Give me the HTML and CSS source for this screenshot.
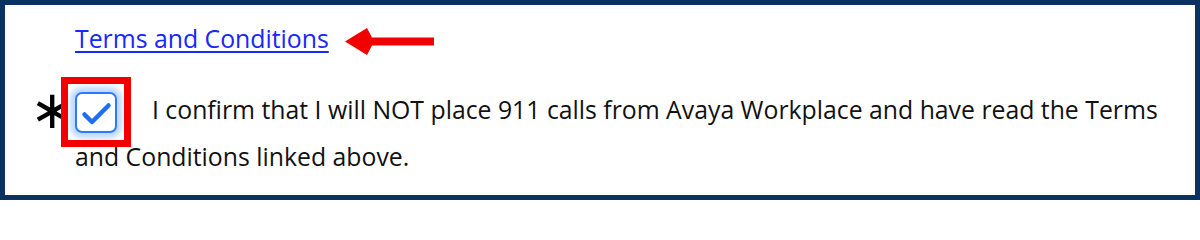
FILE: index.html
```html
<!DOCTYPE html>
<html lang="en">
<head>
<meta charset="utf-8">
<title>Terms and Conditions</title>
<link rel="stylesheet" href="styles.css">
</head>
<body>
<div class="frame">
  <div class="terms-row">
    <a class="terms-link" href="#">Terms and Conditions</a>
    <svg class="arrow" width="90" height="28" viewBox="0 0 90 28" aria-hidden="true">
      <polygon points="0,13.5 22,0 27,9.5 89,9.5 89,17.5 27,17.5 22,27" fill="#f20000"/>
    </svg>
  </div>
  <p class="consent"><span class="req">∗</span><span class="cb-wrap"><span class="cb"><svg width="42" height="41" viewBox="0 0 42 41"><polyline points="9.5,22.5 17,30 33.5,13.5" fill="none" stroke="#1d6ff2" stroke-width="4.5" stroke-linecap="round" stroke-linejoin="round"/></svg></span><span class="mark"></span></span>I confirm that I will NOT place 911 calls from Avaya Workplace and have read the Terms and Conditions linked above.</p>
</div>
</body>
</html>
```
FILE: styles.css
```css
html, body {
  margin: 0;
  padding: 0;
  background: #ffffff;
}

.frame {
  box-sizing: border-box;
  width: 1200px;
  height: 200px;
  border: 5px solid #0a3160;
  padding: 16px 20px 0 70px;
  font-family: "Open Sans", "Noto Sans", sans-serif;
  font-size: 24.8px;
  color: #111111;
  overflow: hidden;
}

.terms-row {
  display: flex;
  align-items: flex-start;
  gap: 16px;
  line-height: 34px;
  height: 34px;
}

.terms-link {
  color: #1428ff;
  text-decoration: underline;
  text-underline-offset: 3px;
  text-decoration-thickness: 1.5px;
}

.arrow {
  display: block;
  margin-top: 7px;
}

.consent {
  margin: 31px 0 0 0;
  line-height: 46px;
  text-indent: -38px;
}

.req {
  display: inline-block;
  width: 38px;
  text-indent: -7px;
  font-family: "DejaVu Sans", sans-serif;
  font-size: 53px;
  line-height: 20px;
  vertical-align: -9px;
  color: #000000;
}

.cb-wrap {
  position: relative;
  display: inline-block;
  width: 42px;
  height: 41px;
  vertical-align: middle;
  margin-right: 35px;
  text-indent: 0;
}

.cb {
  box-sizing: border-box;
  display: block;
  width: 42px;
  height: 41px;
  border: 2px solid #2a7bff;
  border-radius: 7px;
  background: #ffffff;
  box-shadow: 0 0 5px 5px rgba(70, 150, 255, 0.35);
}

.cb svg {
  display: block;
  margin: -2px;
}

.mark {
  position: absolute;
  left: -14px;
  top: -15px;
  box-sizing: border-box;
  width: 70px;
  height: 70px;
  border: 7.5px solid #f20000;
}
```
